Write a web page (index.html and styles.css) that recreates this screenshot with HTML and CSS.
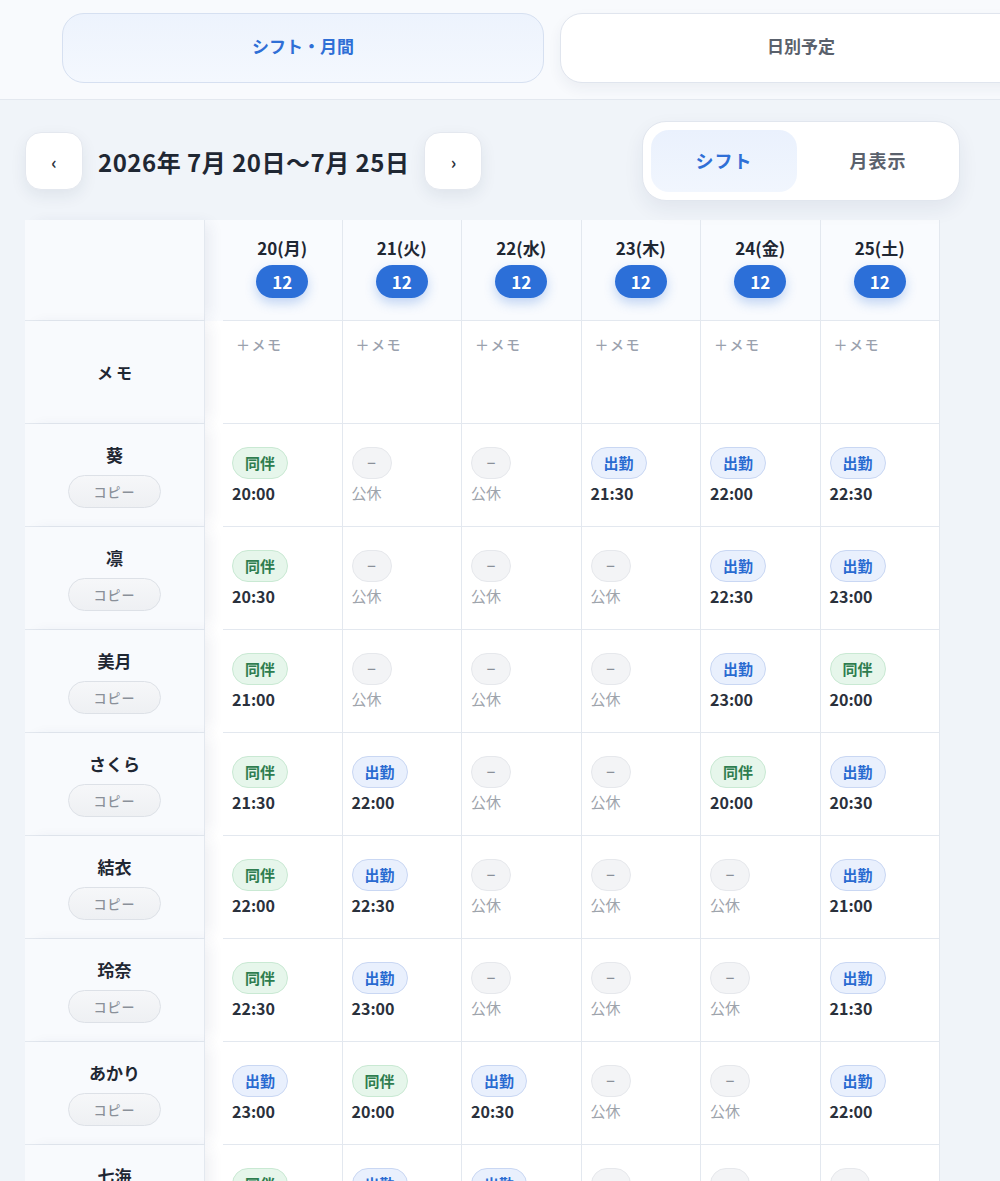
FILE: index.html
```html
<!DOCTYPE html>
<html lang="ja">
<head>
  <meta charset="UTF-8" />
  <meta name="viewport" content="width=device-width, initial-scale=1.0"/>
  <title>シフト・月間</title>
  <link rel="stylesheet" href="styles.css">
</head>
<body>

  <div class="top-tabs">
    <button class="tab active">シフト・月間</button>
    <button class="tab">日別予定</button>
  </div>

  <main class="page">

    <div class="toolbar">
      <div class="week-nav">
        <button class="nav-btn">‹</button>
        <h1 class="week-title">2026年 7月 20日〜7月 25日</h1>
        <button class="nav-btn">›</button>
      </div>

      <div class="view-toggle">
        <button class="toggle-item active">シフト</button>
        <button class="toggle-item">月表示</button>
      </div>
    </div>

    <div class="schedule" id="schedule">
      <div class="sched-row head-row">
        <div class="name-cell"></div>
        <div class="day-head"><span class="day-label">20(月)</span><span class="count">12</span></div>
        <div class="day-head"><span class="day-label">21(火)</span><span class="count">12</span></div>
        <div class="day-head"><span class="day-label">22(水)</span><span class="count">12</span></div>
        <div class="day-head"><span class="day-label">23(木)</span><span class="count">12</span></div>
        <div class="day-head"><span class="day-label">24(金)</span><span class="count">12</span></div>
        <div class="day-head"><span class="day-label">25(土)</span><span class="count">12</span></div>
      </div>
    </div>

  </main>

  <script>
    // d = 同伴, s = 出勤, "-" = 公休
    const staff = [
      ["葵",     ["d20:00", "-", "-", "s21:30", "s22:00", "s22:30"]],
      ["凛",     ["d20:30", "-", "-", "-", "s22:30", "s23:00"]],
      ["美月",   ["d21:00", "-", "-", "-", "s23:00", "d20:00"]],
      ["さくら", ["d21:30", "s22:00", "-", "-", "d20:00", "s20:30"]],
      ["結衣",   ["d22:00", "s22:30", "-", "-", "-", "s21:00"]],
      ["玲奈",   ["d22:30", "s23:00", "-", "-", "-", "s21:30"]],
      ["あかり", ["s23:00", "d20:00", "s20:30", "-", "-", "s22:00"]],
      ["七海",   ["d23:00", "s20:30", "s21:00", "-", "-", "-"]]
    ];

    function shiftCell(code) {
      if (code === "-") {
        return `<div class="day-cell"><span class="pill off">−</span><span class="time off-text">公休</span></div>`;
      }
      const kind = code[0] === "d" ? "dohan" : "work";
      const label = code[0] === "d" ? "同伴" : "出勤";
      return `<div class="day-cell"><span class="pill ${kind}">${label}</span><span class="time">${code.slice(1)}</span></div>`;
    }

    function buildSchedule() {
      const table = document.getElementById("schedule");

      const memo = document.createElement("div");
      memo.className = "sched-row memo-row";
      memo.innerHTML = `<div class="name-cell"><span class="name">メモ</span></div>` +
        Array(6).fill(`<div class="memo-cell"><button class="memo-btn">＋メモ</button></div>`).join("");
      table.appendChild(memo);

      staff.forEach(([name, shifts]) => {
        const row = document.createElement("div");
        row.className = "sched-row";
        row.innerHTML = `
          <div class="name-cell">
            <span class="name">${name}</span>
            <button class="copy-btn">コピー</button>
          </div>
          ${shifts.map(shiftCell).join("")}
        `;
        table.appendChild(row);
      });
    }

    document.addEventListener("DOMContentLoaded", buildSchedule);
  </script>

</body>
</html>
```

FILE: styles.css
```css
* {
  box-sizing: border-box;
  margin: 0;
  padding: 0;
}

body {
  font-family: "Noto Sans CJK JP", "Noto Sans", sans-serif;
  background-color: #f0f4f9;
  color: #1f2733;
  overflow: hidden;
}

button {
  font-family: inherit;
  cursor: pointer;
}

/* top tabs */
.top-tabs {
  display: flex;
  gap: 16px;
  height: 100px;
  padding: 13px 0 0 62px;
  background-color: #f8fafd;
  border-bottom: 1px solid #e3e8ef;
  overflow: hidden;
}

.tab {
  flex: 0 0 482px;
  height: 70px;
  padding-bottom: 5px;
  border-radius: 22px;
  border: 1px solid #e0e5ee;
  background: #fff;
  font-size: 17px;
  font-weight: 700;
  color: #5a616c;
  box-shadow: 0 6px 14px rgba(30, 45, 80, 0.06);
}

.tab.active {
  background: linear-gradient(180deg, #edf3fd, #f4f8fe);
  border-color: #d6e0f1;
  color: #2f6fd6;
  box-shadow: none;
}

.page {
  padding: 21px 40px 0 25px;
}

/* week navigation */
.toolbar {
  display: flex;
  align-items: center;
  justify-content: space-between;
  height: 80px;
}

.week-nav {
  display: flex;
  align-items: center;
  gap: 15px;
}

.nav-btn {
  width: 58px;
  height: 58px;
  border-radius: 16px;
  border: 1px solid #e4e8ef;
  background: #fff;
  color: #2a313c;
  font-size: 17px;
  font-weight: 700;
  box-shadow: 0 6px 16px rgba(30, 45, 80, 0.08);
}

.week-title {
  font-size: 24px;
  font-weight: 700;
  color: #1f2733;
  letter-spacing: 0.5px;
}

.view-toggle {
  display: flex;
  gap: 8px;
  width: 318px;
  height: 80px;
  padding: 8px;
  border-radius: 24px;
  border: 1px solid #e1e6ee;
  background: #fff;
  box-shadow: 0 8px 20px rgba(30, 45, 80, 0.07);
}

.toggle-item {
  flex: 1;
  padding-bottom: 2px;
  border: none;
  border-radius: 18px;
  background: transparent;
  font-size: 18px;
  font-weight: 700;
  color: #5a616c;
  letter-spacing: 1px;
}

.toggle-item.active {
  background: linear-gradient(180deg, #eaf1fd, #f1f6fe);
  color: #2f6fd6;
}

/* schedule table */
.schedule {
  margin-top: 19px;
  width: 915px;
}

.sched-row {
  display: grid;
  grid-template-columns: 198px repeat(6, 1fr);
  height: 103px;
  background: #fff;
}

.head-row {
  height: 101px;
  background: #f9fbfe;
}

.name-cell {
  margin-right: 18px;
  display: flex;
  flex-direction: column;
  align-items: center;
  justify-content: center;
  gap: 8px;
  background: #f8fafd;
  border-right: 1px solid #e3e8ef;
  border-bottom: 1px solid #e3e8ef;
  box-shadow: 8px 0 14px -4px rgba(40, 60, 100, 0.09);
  position: relative;
}

.name {
  font-size: 17px;
  font-weight: 700;
  line-height: 24px;
  color: #1f2733;
}

.memo-row .name {
  font-size: 16px;
  letter-spacing: 3px;
  padding-left: 3px;
}

.copy-btn {
  width: 93px;
  height: 33px;
  border-radius: 17px;
  border: 1px solid #dde1e7;
  background: linear-gradient(180deg, #f6f7f9, #eef0f3);
  color: #8a9099;
  font-size: 13px;
  font-weight: 500;
  letter-spacing: 1px;
}

.day-head {
  display: flex;
  flex-direction: column;
  align-items: center;
  justify-content: center;
  gap: 6px;
  padding-bottom: 5px;
  border-right: 1px solid #e3e8ef;
  border-bottom: 1px solid #e3e8ef;
}

.day-label {
  font-size: 17px;
  font-weight: 700;
  line-height: 22px;
  color: #1f2733;
}

.count {
  width: 52px;
  height: 33px;
  border-radius: 17px;
  background: #2c6fd8;
  color: #fff;
  font-size: 17px;
  font-weight: 700;
  line-height: 33px;
  text-align: center;
  box-shadow: 0 5px 12px rgba(44, 111, 216, 0.28);
}

.memo-cell {
  padding: 10px 0 0 8px;
  border-right: 1px solid #e3e8ef;
  border-bottom: 1px solid #e3e8ef;
}

.memo-btn {
  border: none;
  background: none;
  padding: 0 5px;
  font-size: 14px;
  font-weight: 500;
  line-height: 20px;
  color: #9aa1ad;
  letter-spacing: 1.5px;
}

.day-cell {
  display: flex;
  flex-direction: column;
  align-items: flex-start;
  justify-content: center;
  padding: 0 9px;
  border-right: 1px solid #e3e8ef;
  border-bottom: 1px solid #e3e8ef;
}

.pill {
  height: 32px;
  padding: 0 12px;
  border-radius: 16px;
  border: 1px solid transparent;
  font-size: 15px;
  font-weight: 700;
  line-height: 30px;
}

.pill.dohan {
  background: #e6f6eb;
  border-color: #c9e9d3;
  color: #2e7d4f;
}

.pill.work {
  background: #e9f0fd;
  border-color: #c9d7f3;
  color: #2a6bd1;
}

.pill.off {
  width: 40px;
  padding: 0;
  text-align: center;
  background: #f3f4f6;
  border-color: #e6e8ec;
  color: #8a9099;
  font-weight: 500;
}

.time {
  margin-top: 4px;
  font-size: 16px;
  font-weight: 700;
  line-height: 20px;
  color: #2a313c;
}

.time.off-text {
  font-size: 15px;
  font-weight: 400;
  color: #9ea4ac;
}
```
